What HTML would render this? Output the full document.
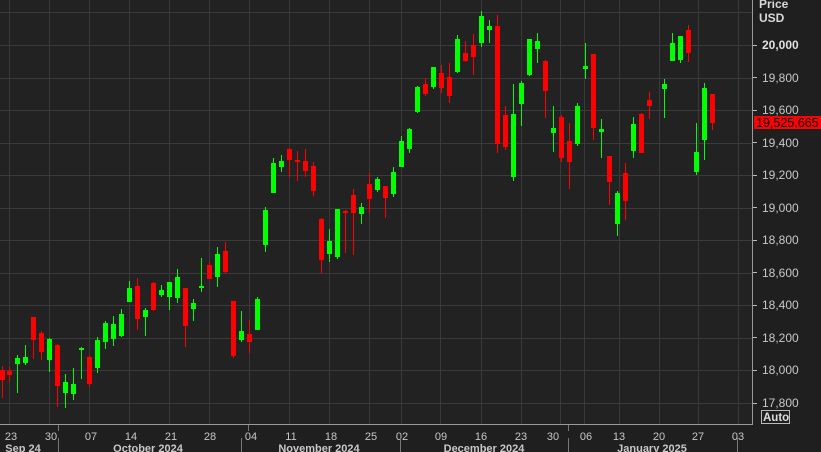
<!DOCTYPE html>
<html><head><meta charset="utf-8"><style>
html,body{margin:0;padding:0;background:#1f1f1f;width:821px;height:452px;overflow:hidden;font-family:"Liberation Sans",sans-serif}
svg{position:absolute;left:0;top:0}
</style></head><body>
<svg id="s" width="821" height="452" xmlns="http://www.w3.org/2000/svg">
<rect x="0" y="0" width="821" height="452" fill="#1f1f1f"/>
<rect x="0" y="0" width="752" height="424" fill="#222222"/>
<g id="grid" stroke="#3a3a3a" stroke-width="1"></g>
<g id="c"></g>
<line x1="752.5" y1="0" x2="752.5" y2="424" stroke="#9a9a9a"/>
<line x1="0" y1="424.5" x2="753" y2="424.5" stroke="#9a9a9a"/>
<g font-size="12" fill="#c8c8c8">
<text x="759" y="8" font-weight="bold" fill="#d8d8d8">Price</text>
<text x="759" y="22" font-weight="bold" fill="#d8d8d8">USD</text>
<text x="762" y="49" font-weight="bold" fill="#e0e0e0">20,000</text>
<text x="762" y="82">19,800</text>
<text x="762" y="114">19,600</text>
<text x="762" y="147">19,400</text>
<text x="762" y="179">19,200</text>
<text x="762" y="212">19,000</text>
<text x="762" y="244">18,800</text>
<text x="762" y="277">18,600</text>
<text x="762" y="309">18,400</text>
<text x="762" y="342">18,200</text>
<text x="762" y="374">18,000</text>
<text x="762" y="407">17,800</text>
</g>
<g stroke="#bbb"><line x1="753" y1="45.5" x2="757" y2="45.5"/><line x1="753" y1="77.5" x2="757" y2="77.5"/><line x1="753" y1="110.5" x2="757" y2="110.5"/><line x1="753" y1="142.5" x2="757" y2="142.5"/><line x1="753" y1="175.5" x2="757" y2="175.5"/><line x1="753" y1="207.5" x2="757" y2="207.5"/><line x1="753" y1="240.5" x2="757" y2="240.5"/><line x1="753" y1="272.5" x2="757" y2="272.5"/><line x1="753" y1="305.5" x2="757" y2="305.5"/><line x1="753" y1="337.5" x2="757" y2="337.5"/><line x1="753" y1="370.5" x2="757" y2="370.5"/><line x1="753" y1="403.5" x2="757" y2="403.5"/></g>
<rect x="754" y="116" width="67" height="13" fill="#ff0000"/>
<text x="756" y="127" font-size="12.5" fill="#000">19,525.665</text>
<rect x="761.5" y="410.5" width="28" height="13" fill="none" stroke="#bbb"/>
<text x="763" y="421" font-size="11.5" font-weight="bold" fill="#ddd">Auto</text>
<g font-size="11" fill="#c8c8c8" text-anchor="middle">
<text x="11" y="440">23</text><text x="51" y="440">30</text><text x="91" y="440">07</text><text x="131" y="440">14</text><text x="171" y="440">21</text><text x="210" y="440">28</text><text x="251" y="440">04</text><text x="291" y="440">11</text><text x="331" y="440">18</text><text x="371" y="440">25</text><text x="402" y="440">02</text><text x="441" y="440">09</text><text x="481" y="440">16</text><text x="521" y="440">23</text><text x="553" y="440">30</text><text x="586" y="440">06</text><text x="619" y="440">13</text><text x="659" y="440">20</text><text x="698" y="440">27</text><text x="738" y="440">03</text>
</g>
<g font-size="11" font-weight="bold" fill="#c8c8c8" text-anchor="middle">
<text x="23" y="452">Sep 24</text><text x="148" y="452">October 2024</text><text x="319" y="452">November 2024</text><text x="484" y="452">December 2024</text><text x="652" y="452">January 2025</text>
</g>
<g stroke="#777"><line x1="58.5" y1="438" x2="58.5" y2="452"/><line x1="241.5" y1="438" x2="241.5" y2="452"/><line x1="400.5" y1="438" x2="400.5" y2="452"/><line x1="568.5" y1="438" x2="568.5" y2="452"/><line x1="737.5" y1="438" x2="737.5" y2="452"/>
<line x1="58.5" y1="425" x2="58.5" y2="431"/><line x1="248.5" y1="425" x2="248.5" y2="431"/><line x1="568.5" y1="425" x2="568.5" y2="431"/></g>
</svg>
<script>
var ns="http://www.w3.org/2000/svg",g=document.getElementById('grid'),c=document.getElementById('c');
function el(p,t,a){var e=document.createElementNS(ns,t);for(var k in a)e.setAttribute(k,a[k]);p.appendChild(e);}
for(var i=0;i<13;i++){var y=Math.round(12.4+i*32.55)+0.5;el(g,'line',{x1:0,y1:y,x2:752,y2:y});}
[9,49,89,129,169,209,249,289,329,369,401,440,481,521,560,584,619,659,698,738].forEach(function(x){el(g,'line',{x1:x+.5,y1:0,x2:x+.5,y2:424});});
var G='#00ff00',R='#ff0000';
var d=[[2,370,380,366,398,R],[9,371,375,367,382,R],[17,358,364,355,393,G],[25,357,363,345,365,G],[33,317,340,317,359,R],[41,333,352,331,360,R],[49,339,360,338,372,G],[57,345,386,344,407,R],[65,382,393,374,408,G],[73,384,394,368,400,G],[81,348,350,347,379,G],[89,357,384,355,387,R],[97,340,368,337,373,G],[105,323,342,321,349,G],[113,324,339,316,346,G],[121,314,336,309,337,G],[129,288,302,281,302,G],[137,286,319,278,330,R],[145,310,317,308,336,G],[153,283,310,282,311,R],[161,290,295,285,297,G],[169,282,297,282,310,G],[177,277,298,269,303,G],[185,288,326,288,347,R],[193,303,309,299,321,G],[201,286,288,258,292,G],[209,265,279,262,279,R],[217,254,277,247,287,G],[225,251,272,242,273,R],[233,301,356,301,358,R],[241,331,340,311,342,G],[249,334,342,320,353,R],[257,299,330,297,330,G],[265,210,245,207,252,G],[273,163,193,158,193,G],[281,161,167,155,172,G],[289,149,160,148,177,R],[297,160,162,151,181,R],[305,161,171,149,177,R],[313,166,191,162,196,R],[321,219,260,218,273,R],[329,241,254,229,262,G],[337,209,257,209,259,G],[345,211,213,210,253,R],[353,195,213,189,255,R],[361,207,214,203,224,G],[369,184,199,173,213,R],[377,179,190,177,192,G],[385,186,198,186,218,R],[393,172,194,167,197,G],[401,141,167,136,167,G],[409,129,149,128,153,G],[417,87,112,86,113,G],[425,84,94,78,96,R],[433,67,87,67,89,G],[441,73,88,65,93,R],[449,77,96,63,103,R],[457,39,72,35,73,G],[465,53,61,41,62,R],[473,45,57,34,75,R],[481,16,43,11,47,G],[489,26,30,20,43,G],[497,26,144,15,153,R],[505,115,147,106,150,R],[513,114,177,84,181,G],[521,83,104,81,126,G],[529,39,75,39,76,G],[537,41,49,33,63,G],[545,61,91,60,118,R],[553,128,133,106,152,G],[561,117,158,115,162,R],[569,141,162,123,189,R],[577,106,144,103,146,G],[585,66,69,43,79,G],[593,54,128,54,140,R],[601,129,132,119,158,G],[609,156,182,156,205,R],[617,193,224,191,236,G],[625,173,201,163,220,R],[633,124,151,117,158,G],[641,114,153,113,153,R],[649,100,106,92,119,R],[664,84,89,79,118,G],[672,43,61,33,61,G],[680,36,60,36,63,G],[688,30,53,25,62,R],[696,152,172,123,175,G],[704,88,140,83,160,G],[712,94,123,94,130,R]];
d.forEach(function(a){el(c,'rect',{x:a[0],y:a[3],width:1,height:a[4]-a[3],fill:a[5]});el(c,'rect',{x:a[0]-2,y:a[1],width:5,height:Math.max(2,a[2]-a[1]),fill:a[5]});});
</script>
</body></html>
